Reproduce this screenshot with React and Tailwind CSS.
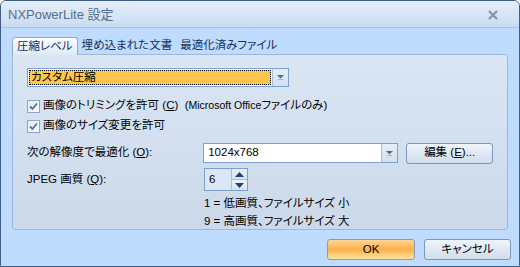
import React from "react";

const F = { fontFamily: '"Liberation Sans", "Noto Sans CJK JP", sans-serif', fontFeatureSettings: '"palt"' };

function Check({ children }) {
  return (
    <div className="flex items-center h-[20px]">
      <div className="w-[13px] h-[13px] border border-[#8ea6c6] bg-gradient-to-br from-[#e4ebf3] to-[#fbfcfe] flex items-center justify-center">
        <svg width="9" height="9" viewBox="0 0 9 9">
          <path d="M1 4.5 L3.5 7 L8 1.5" stroke="#4a6fb0" strokeWidth="1.8" fill="none" />
        </svg>
      </div>
      <span className="ml-[3px] text-[11.5px] text-black whitespace-pre">{children}</span>
    </div>
  );
}

function DropBtn() {
  return (
    <div className="w-[16px] h-full border-l border-[#a8bfdc] bg-gradient-to-b from-[#e6eef8] to-[#d2e0f0] flex flex-col items-center justify-center">
      <svg width="7" height="5" viewBox="0 0 7 5"><path d="M0 0 H7 L3.5 3.5 Z" fill="#4d6a93" /><path d="M1 4.5 H6" stroke="#9fb3cf" strokeWidth="1" /></svg>
    </div>
  );
}

export default function App() {
  return (
    <div style={F} className="w-[520px] h-[267px] bg-[#bfdbfe] border border-[#3f5f8a] rounded-t-[6px] flex flex-col overflow-hidden">
      <div className="h-[27px] shrink-0 bg-gradient-to-b from-[#e5eefa] to-[#cadcf2] border-b border-[#a8c3e6] flex items-center justify-between px-[7px]">
        <span className="text-[13px] text-[#5a6c88] mt-[2px]">NXPowerLite 設定</span>
        <svg width="12" height="12" viewBox="0 0 12 12" className="mr-[13px] mt-[2px]">
          <path d="M2 2 L10 10 M10 2 L2 10" stroke="#8393aa" strokeWidth="2.2" />
        </svg>
      </div>
      <div className="flex flex-col px-[11px] pt-[8px]">
        <div className="flex items-end h-[18px] text-[11.5px] text-[#15315c]">
          <div className="h-[18px] px-[4px] border border-b-0 border-[#92abcf] rounded-t-[3px] bg-gradient-to-b from-[#fdfeff] to-[#dfe9f6] flex items-center relative top-[1px] z-10">
            圧縮レベル
          </div>
          <div className="h-[17px] flex items-center px-[4px]">埋め込まれた文書</div>
          <div className="h-[17px] flex items-center px-[4px]">最適化済みファイル</div>
        </div>
        <div className="h-[176px] border border-[#9eb8da] rounded-b-[3px] rounded-tr-[3px] bg-gradient-to-b from-[#dbe6f4] to-[#cbd9ea] px-[14px] pt-[13px] flex flex-col text-[11.5px] text-black">
          <div className="w-[262px] h-[19px] border border-[#7ea0cf] bg-white flex">
            <div className="flex-1 m-[1px] bg-[#fcc64f] border border-dotted border-black flex items-center px-[1px]">カスタム圧縮</div>
            <DropBtn />
          </div>
          <div className="mt-[9px] flex flex-col">
            <Check>
              画像のトリミングを許可 (<u>C</u>)  (<span className="text-[10.5px]">Microsoft Office</span>ファイルのみ)
            </Check>
            <Check>画像のサイズ変更を許可</Check>
          </div>
          <div className="mt-[7px] flex items-center h-[20px]">
            <span className="w-[177px]">次の解像度で最適化 (<u>O</u>):</span>
            <div className="w-[196px] h-[20px] border border-[#7ea0cf] bg-white flex">
              <div className="flex-1 flex items-center px-[4px]">1024x768</div>
              <DropBtn />
            </div>
            <div className="ml-[8px] w-[87px] h-[21px] border border-[#7f96b8] rounded-[3px] bg-gradient-to-b from-[#eef4fb] to-[#cfdded] flex items-center justify-center">編集 (<u>E</u>)...</div>
          </div>
          <div className="mt-[5px] flex items-center h-[23px]">
            <span className="w-[177px]">JPEG 画質 (<u>Q</u>):</span>
            <div className="w-[44px] h-[23px] border border-[#7ea0cf] bg-[#dce7f5] flex">
              <div className="flex-1 flex items-center px-[4px]">6</div>
              <div className="w-[16px] flex flex-col border-l border-[#a8bfdc]">
                <div className="flex-1 flex items-center justify-center bg-gradient-to-b from-[#eaf1f9] to-[#d5e2f1] border-b border-[#a8bfdc]">
                  <svg width="9" height="5" viewBox="0 0 9 5"><path d="M0 5 H9 L4.5 0 Z" fill="#1e3f7a" /></svg>
                </div>
                <div className="flex-1 flex items-center justify-center bg-gradient-to-b from-[#eaf1f9] to-[#d5e2f1]">
                  <svg width="9" height="5" viewBox="0 0 9 5"><path d="M0 0 H9 L4.5 5 Z" fill="#1e3f7a" /></svg>
                </div>
              </div>
            </div>
          </div>
          <div className="ml-[177px] mt-[3px] flex flex-col leading-[18px]">
            <span>1 = 低画質、ファイルサイズ 小</span>
            <span>9 = 高画質、ファイルサイズ 大</span>
          </div>
        </div>
        <div className="flex justify-end gap-[9px] mt-[9px] -mr-[3px] text-[11.5px] text-black">
          <div className="w-[88px] h-[21px] border border-[#8c9bb3] rounded-[3px] bg-gradient-to-b from-[#fcd795] via-[#fbb048] to-[#fde49a] flex items-center justify-center">OK</div>
          <div className="w-[87px] h-[21px] border border-[#7f96b8] rounded-[3px] bg-gradient-to-b from-[#eef4fb] to-[#cfdded] flex items-center justify-center">キャンセル</div>
        </div>
      </div>
    </div>
  );
}
